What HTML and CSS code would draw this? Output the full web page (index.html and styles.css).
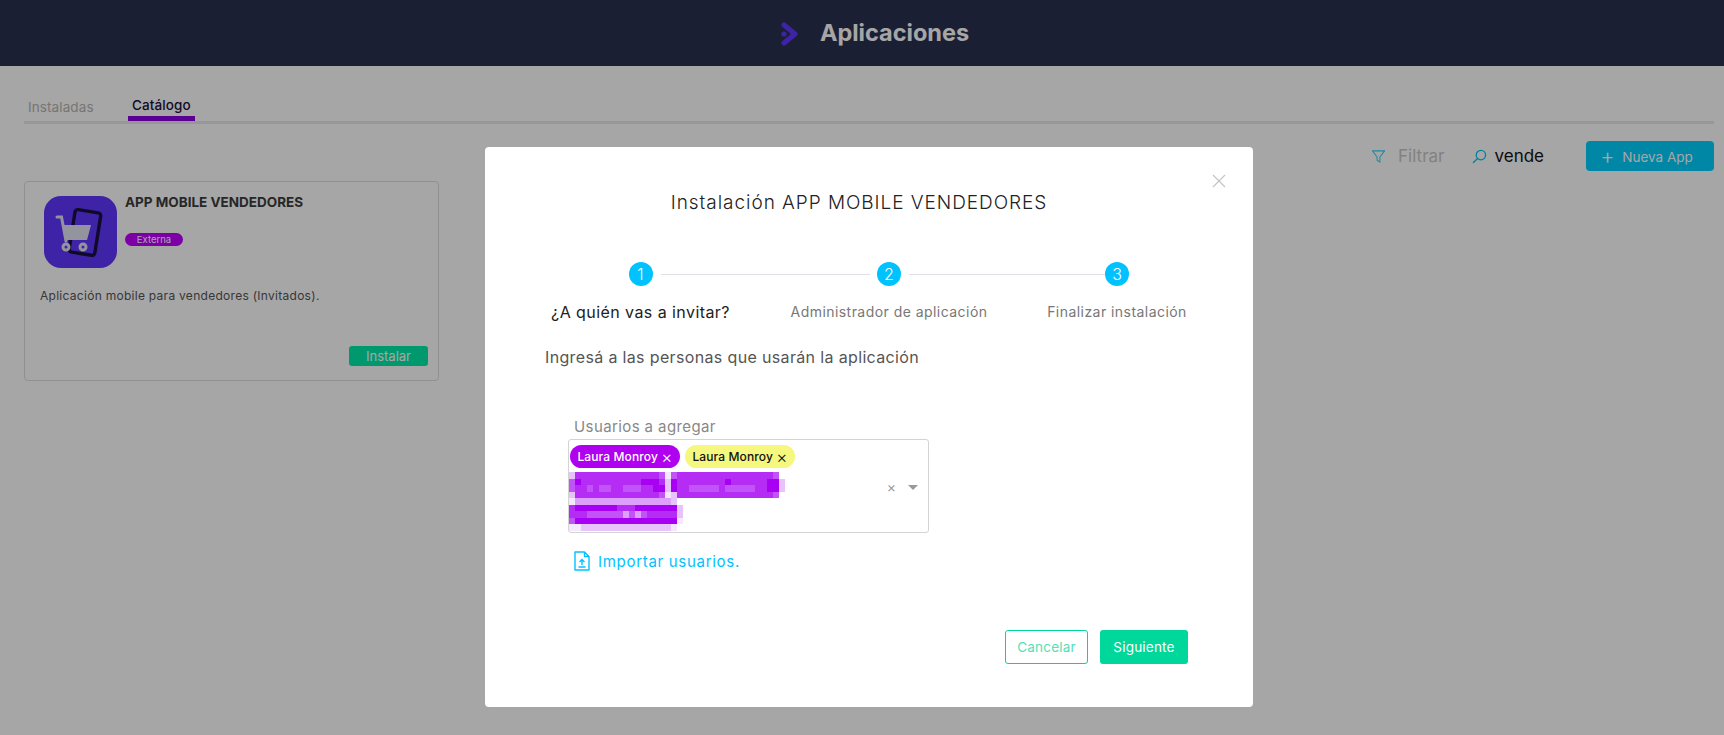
FILE: index.html
```html
<!DOCTYPE html>
<html lang="es">
<head>
  <meta charset="UTF-8">
  <title>Aplicaciones</title>
  <link rel="stylesheet" href="styles.css">
</head>
<body>
  <header class="topbar">
    <svg class="topbar-logo" viewBox="0 0 18 24">
      <path d="M3 3 L14 12 L3 21" fill="none" stroke="#6236ff" stroke-width="5" stroke-linecap="round" stroke-linejoin="round"/>
      <circle cx="3" cy="12" r="2.6" fill="#6236ff"/>
    </svg>
    <h1>Aplicaciones</h1>
  </header>

  <main class="page">
    <nav class="tabs">
      <a class="tab">Instaladas</a>
      <a class="tab tab-active">Catálogo</a>
    </nav>

    <div class="toolbar">
      <svg class="tool-icon" viewBox="0 0 16 16">
        <path d="M1.5 2 H14.5 L9.5 8.5 V14 L6.5 12 V8.5 Z" fill="none" stroke="#2fd4f7" stroke-width="1.1" stroke-linejoin="round"/>
      </svg>
      <span class="filter-text">Filtrar</span>
      <svg class="tool-icon search-icon" viewBox="0 0 16 16">
        <circle cx="9.5" cy="6.5" r="5" fill="none" stroke="#00c8f5" stroke-width="1.4"/>
        <path d="M6 10.2 L1.5 14.5" stroke="#00c8f5" stroke-width="1.4" stroke-linecap="round"/>
      </svg>
      <span class="search-text">vende</span>
      <button class="new-app"><span class="plus">+</span> Nueva App</button>
    </div>

    <article class="app-card">
      <div class="app-head">
        <svg class="app-icon" viewBox="0 0 73 72">
          <rect width="73" height="72" rx="17" fill="#6236ff"/>
          <rect x="28" y="15" width="26" height="43" rx="3" transform="rotate(9 41 36)" fill="none" stroke="#17103f" stroke-width="3.4"/>
          <path d="M19 29 H47 L43 44 H22 Z" fill="#e4e4f5"/>
          <path d="M13 21 H17.5 L22 45" fill="none" stroke="#e4e4f5" stroke-width="3" stroke-linecap="round"/>
          <circle cx="22" cy="51" r="3" fill="none" stroke="#e4e4f5" stroke-width="3"/>
          <circle cx="39" cy="51" r="3" fill="none" stroke="#e4e4f5" stroke-width="3"/>
        </svg>
        <div class="app-info">
          <h2>APP MOBILE VENDEDORES</h2>
          <span class="badge">Externa</span>
        </div>
      </div>
      <p class="app-desc">Aplicación mobile para vendedores (Invitados).</p>
      <div class="app-actions">
        <button class="install">Instalar</button>
      </div>
    </article>
  </main>

  <div class="overlay">
    <section class="modal">
      <svg class="modal-close" viewBox="0 0 14 14">
        <path d="M1 1 L13 13 M13 1 L1 13" stroke="#c4c4c4" stroke-width="1.2"/>
      </svg>
      <h3 class="modal-title">Instalación APP MOBILE VENDEDORES</h3>

      <ol class="steps">
        <li class="step step-one step-current"><span class="step-num">1</span><span class="step-label">¿A quién vas a invitar?</span></li>
        <li class="step step-two"><span class="step-num">2</span><span class="step-label">Administrador de aplicación</span></li>
        <li class="step step-three"><span class="step-num">3</span><span class="step-label">Finalizar instalación</span></li>
      </ol>

      <p class="intro">Ingresá a las personas que usarán la aplicación</p>

      <div class="field">
        <label class="field-label">Usuarios a agregar</label>
        <div class="select-box">
          <div class="select-values">
            <div class="chips">
              <span class="chip chip-purple">Laura Monroy <i>×</i></span>
              <span class="chip chip-yellow">Laura Monroy <i>×</i></span>
            </div>
            <svg class="mosaic" viewBox="0 0 36 9" preserveAspectRatio="none" shape-rendering="crispEdges">
              <rect class="px-c" x="0" y="0" width="1" height="1"/>
              <rect class="px-a" x="1" y="0" width="14" height="1"/>
              <rect class="px-b" x="15" y="0" width="1" height="1"/>
              <rect class="px-e" x="16" y="0" width="1" height="1"/>
              <rect class="px-b" x="17" y="0" width="1" height="1"/>
              <rect class="px-a" x="18" y="0" width="16" height="1"/>
              <rect class="px-b" x="34" y="0" width="1" height="1"/>
              <rect class="px-b" x="0" y="1" width="1" height="2"/>
              <rect class="px-a" x="1" y="1" width="15" height="1"/>
              <rect class="px-d" x="1" y="1" width="1" height="1"/>
              <rect class="px-d" x="12" y="1" width="3" height="1"/>
              <rect class="px-c" x="16" y="1" width="1" height="2"/>
              <rect class="px-d" x="17" y="1" width="1" height="2"/>
              <rect class="px-a" x="18" y="1" width="16" height="1"/>
              <rect class="px-d" x="26" y="1" width="1" height="1"/>
              <rect class="px-d" x="33" y="1" width="2" height="2"/>
              <rect class="px-c" x="35" y="1" width="1" height="2"/>
              <rect class="px-a" x="1" y="2" width="15" height="1"/>
              <rect class="px-b" x="3" y="2" width="1" height="1"/>
              <rect class="px-b" x="5" y="2" width="2" height="1"/>
              <rect class="px-b" x="9" y="2" width="3" height="1"/>
              <rect class="px-d" x="14" y="2" width="2" height="1"/>
              <rect class="px-a" x="18" y="2" width="15" height="1"/>
              <rect class="px-b" x="20" y="2" width="5" height="1"/>
              <rect class="px-b" x="26" y="2" width="5" height="1"/>
              <rect class="px-c" x="0" y="3" width="1" height="1"/>
              <rect class="px-a" x="1" y="3" width="14" height="1"/>
              <rect class="px-b" x="15" y="3" width="1" height="1"/>
              <rect class="px-e" x="16" y="3" width="1" height="1"/>
              <rect class="px-c" x="17" y="3" width="1" height="1"/>
              <rect class="px-a" x="18" y="3" width="16" height="1"/>
              <rect class="px-b" x="34" y="3" width="1" height="1"/>
              <rect class="px-e" x="0" y="4" width="1" height="1"/>
              <rect class="px-f" x="1" y="4" width="16" height="1"/>
              <rect class="px-c" x="17" y="4" width="1" height="1"/>
              <rect class="px-d" x="0" y="5" width="18" height="1"/>
              <rect class="px-a" x="0" y="5" width="1" height="1"/>
              <rect class="px-a" x="8" y="5" width="3" height="1"/>
              <rect class="px-a" x="0" y="6" width="18" height="1"/>
              <rect class="px-b" x="3" y="6" width="10" height="1"/>
              <rect class="px-f" x="9" y="6" width="1" height="1"/>
              <rect class="px-f" x="11" y="6" width="1" height="1"/>
              <rect class="px-c" x="18" y="6" width="1" height="1"/>
              <rect class="px-c" x="18" y="5" width="1" height="1"/>
              <rect class="px-b" x="0" y="7" width="1" height="1"/>
              <rect class="px-d" x="1" y="7" width="17" height="1"/>
              <rect class="px-e" x="18" y="7" width="1" height="1"/>
              <rect class="px-e" x="0" y="8" width="2" height="1"/>
              <rect class="px-c" x="2" y="8" width="15" height="1"/>
              <rect class="px-e" x="17" y="8" width="1" height="1"/>
            </svg>
          </div>
          <div class="select-controls">
            <span class="clear">×</span>
            <span class="caret"></span>
          </div>
        </div>
      </div>

      <a class="import">
        <svg class="import-icon" viewBox="0 0 16 20">
          <path d="M1 1 H10.5 L15 5.5 V19 H1 Z M10.5 1 V5.5 H15" fill="none" stroke="#00c2ff" stroke-width="1.4" stroke-linejoin="round"/>
          <path d="M8 8.5 V14 M5.5 11 L8 8.5 L10.5 11 M4.5 16 H11.5" fill="none" stroke="#00c2ff" stroke-width="1.4"/>
        </svg>
        <span>Importar usuarios.</span>
      </a>

      <div class="modal-footer">
        <button class="btn btn-outline">Cancelar</button>
        <button class="btn btn-solid">Siguiente</button>
      </div>
    </section>
  </div>
</body>
</html>
```

FILE: styles.css
```css
* {
  box-sizing: border-box;
}

body {
  margin: 0;
  height: 735px;
  overflow: hidden;
  background-color: #fff;
  font-family: Inter, "Open Sans", sans-serif;
  color: #333;
}

button {
  font-family: inherit;
  border: none;
  cursor: pointer;
}

.topbar {
  height: 66px;
  background-color: #2a314f;
  display: flex;
  align-items: center;
  justify-content: center;
  gap: 21px;
  padding-left: 26px;
}

.topbar-logo {
  width: 18px;
  height: 24px;
  margin-top: 2px;
}

.topbar h1 {
  margin: 0 0 2px 0;
  font-size: 23.5px;
  font-weight: 700;
  color: #fff;
}

.page {
  padding: 0 10px 0 24px;
}

.tabs {
  display: flex;
  height: 58px;
  align-items: flex-end;
  border-bottom: 3px solid #e8e8e8;
}

.tab {
  font-size: 13.5px;
  letter-spacing: 0.1px;
  color: #b5b5b5;
  height: 39px;
  width: 104px;
  padding: 17px 0 0 4px;
}

.tab-active {
  color: #1a1040;
  font-weight: 500;
  width: 67px;
  border-bottom: 5px solid #8c00e0;
  padding: 15px 0 0 4px;
}

.toolbar {
  display: flex;
  align-items: center;
  justify-content: flex-end;
  height: 30px;
  margin-top: 17px;
}

.tool-icon {
  width: 15px;
  height: 15px;
}

.filter-text {
  font-size: 17px;
  color: #c8c8c8;
  margin: 0 27px 0 12px;
}

.search-text {
  font-size: 17px;
  color: #111;
  margin: 0 42px 0 8px;
}

.new-app {
  width: 128px;
  height: 30px;
  border-radius: 4px;
  background-color: #00d0ff;
  color: #fff;
  font-size: 13.5px;
  padding-right: 13px;
}

.plus {
  font-size: 22px;
  font-weight: 300;
  margin-right: 4px;
  vertical-align: -2px;
}

.app-card {
  width: 415px;
  height: 200px;
  margin-top: 10px;
  background-color: #fff;
  border: 1px solid #dedede;
  border-radius: 4px;
  padding: 14px 10px 0 15px;
}

.app-head {
  display: flex;
  gap: 8px;
  margin-left: 4px;
}

.app-icon {
  width: 73px;
  height: 72px;
  flex-shrink: 0;
}

.app-info h2 {
  margin: -2px 0 0 0;
  font-size: 13.5px;
  line-height: 16px;
  font-weight: 700;
  color: #3d3d3d;
}

.badge {
  display: block;
  width: 58px;
  height: 13px;
  margin-top: 23px;
  border-radius: 7px;
  background-color: #c000ff;
  color: #fff;
  font-size: 9.5px;
  line-height: 13px;
  text-align: center;
}

.app-desc {
  margin: 20px 0 0 0;
  font-size: 12px;
  letter-spacing: 0.28px;
  line-height: 16px;
  color: #555;
}

.app-actions {
  display: flex;
  justify-content: flex-end;
  margin-top: 42px;
}

.install {
  width: 79px;
  height: 20px;
  border-radius: 3px;
  background-color: #00eba8;
  color: #fff;
  font-size: 13px;
}

.overlay {
  position: absolute;
  inset: 0;
  background-color: rgba(0, 0, 0, 0.35);
  display: flex;
  justify-content: center;
  align-items: flex-start;
  padding-top: 147px;
}

.modal {
  position: relative;
  width: 768px;
  height: 560px;
  margin-left: 14px;
  background-color: #fff;
  border-radius: 4px;
  padding: 44px 65px 0 66px;
}

.modal-close {
  position: absolute;
  top: 27px;
  right: 27px;
  width: 14px;
  height: 14px;
}

.modal-title {
  margin: 0;
  padding-right: 21px;
  font-size: 19px;
  letter-spacing: 0.95px;
  line-height: 24px;
  font-weight: 300;
  color: #222;
  text-align: center;
}

.steps {
  list-style: none;
  margin: 47px 0 0 0;
  padding: 0;
  display: flex;
  gap: 60px;
}

.step {
  position: relative;
  display: flex;
  flex-direction: column;
  align-items: center;
}

.step-one {
  width: 179px;
}

.step-two {
  width: 198px;
}

.step-three {
  width: 138px;
}

.step-one::after,
.step-two::after {
  content: '';
  position: absolute;
  top: 12px;
  left: calc(50% + 20px);
  height: 1px;
  background-color: #e0e0e6;
}

.step-one::after {
  width: 209px;
}

.step-two::after {
  width: 197px;
}

.step-num {
  width: 24px;
  height: 24px;
  border-radius: 50%;
  background-color: #00c2ff;
  color: #fff;
  font-size: 16px;
  font-weight: 300;
  line-height: 24px;
  text-align: center;
}

.step-label {
  margin-top: 16px;
  font-size: 14px;
  letter-spacing: 0.45px;
  line-height: 20px;
  color: #777;
  white-space: nowrap;
}

.step-current .step-label {
  font-size: 16px;
  letter-spacing: 0.43px;
  color: #222;
}

.intro {
  margin: 24px 0 0 -6px;
  font-size: 16px;
  letter-spacing: 0.35px;
  line-height: 22px;
  color: #555;
}

.field {
  margin: 50px 0 0 17px;
}

.field-label {
  display: block;
  margin-left: 6px;
  font-size: 15px;
  line-height: 18px;
  letter-spacing: 0.4px;
  color: #888;
}

.select-box {
  margin-top: 3px;
  width: 361px;
  height: 94px;
  border: 1px solid #d4d4d4;
  border-radius: 3px;
  display: flex;
  justify-content: space-between;
}

.chips {
  display: flex;
  gap: 5px;
  padding: 5px 0 0 1px;
}

.chip {
  height: 23px;
  width: 110px;
  border-radius: 12px;
  font-size: 12px;
  letter-spacing: 0.12px;
  font-weight: 500;
  line-height: 23px;
  text-align: center;
  white-space: nowrap;
}

.chip i {
  font-style: normal;
  font-size: 17px;
  font-weight: 300;
  vertical-align: -2px;
}

.chip-purple {
  background-color: #b000f0;
  color: #fff;
}

.chip-yellow {
  background-color: #f5f77e;
  color: #111;
}

.mosaic {
  display: block;
  width: 216px;
  height: 59px;
  margin-top: 4px;
}

.px-a { fill: #b52cf5; }
.px-b { fill: #c254f7; }
.px-c { fill: #e8c2fb; }
.px-d { fill: #a800f2; }
.px-e { fill: #f5e8fd; }
.px-f { fill: #dca0fa; }

.select-controls {
  display: flex;
  align-items: center;
  gap: 12px;
  padding-right: 10px;
}

.clear {
  font-size: 14px;
  color: #999;
}

.caret {
  width: 0;
  height: 0;
  border-left: 5px solid transparent;
  border-right: 5px solid transparent;
  border-top: 5px solid #999;
  margin-top: 2px;
}

.import {
  display: flex;
  align-items: center;
  gap: 8px;
  margin: 18px 0 0 23px;
  height: 20px;
  font-size: 15px;
  letter-spacing: 0.7px;
  color: #00c2ff;
}

.import-icon {
  width: 16px;
  height: 20px;
}

.modal-footer {
  display: flex;
  justify-content: flex-end;
  gap: 12px;
  margin-top: 59px;
}

.btn {
  height: 34px;
  border-radius: 3px;
  font-size: 13.5px;
  letter-spacing: 0.2px;
}

.btn-outline {
  width: 83px;
  background-color: #fff;
  border: 1px solid #00d89b;
  color: #55e0b8;
}

.btn-solid {
  width: 88px;
  background-color: #00d89b;
  color: #fff;
}
```
